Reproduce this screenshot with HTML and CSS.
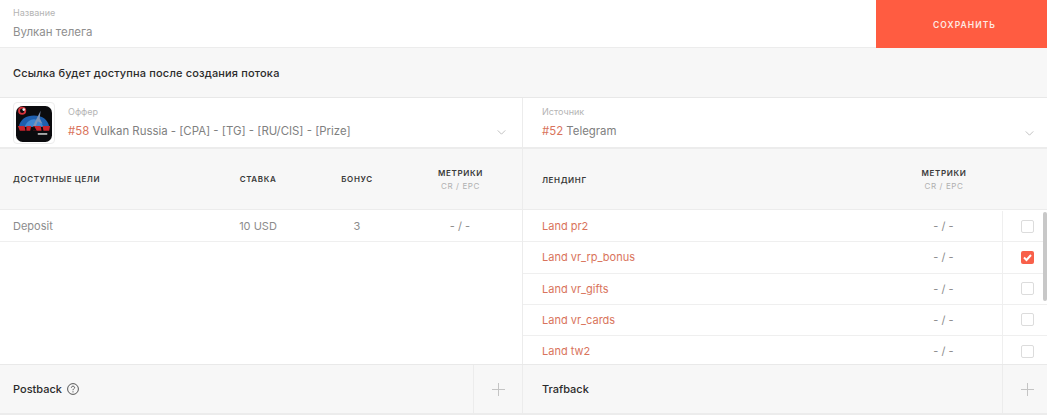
FILE: index.html
```html
<!DOCTYPE html>
<html lang="ru">
<head>
<meta charset="utf-8">
<title>Поток</title>
<link rel="stylesheet" href="styles.css">
</head>
<body>
<div class="page">
  <header class="top">
    <div class="name">
      <div class="label">Название</div>
      <div class="name-value">Вулкан телега</div>
    </div>
    <button class="save">СОХРАНИТЬ</button>
  </header>
  <div class="notice">Ссылка будет доступна после создания потока</div>
  <div class="cols selects">
    <div class="select offer">
      <div class="logo">
        <svg viewBox="0 0 38 38" width="38" height="38">
          <rect width="38" height="38" rx="7" fill="#0b0b0e"/>
          <circle cx="6.500" cy="5" r="3.300" fill="none" stroke="#d5333a" stroke-width="2"/>
          <circle cx="8.200" cy="3.800" r="1.400" fill="#eee"/>
          <path d="M3 22C4 14 11 10 19 10c8 0 15 4 16 12z" fill="#1f5fae"/>
          <path d="M9 22c2-5 6-8 10-8s8 3 10 8z" fill="#3f86d0"/>
          <path d="M18 21l4-8 4-8-1 8 3 6-5-3-2 5z" fill="#7d93b5"/>
          <path d="M2 21h7l1 5H4zM11 21h5l-1 5h-4zM18 21h8l1 5h-9zM28 21h8l-1 5h-6z" fill="#c9242c"/>
          <path d="M16 26l3-5 3 5z" fill="#0b0b0e"/>
          <rect x="23" y="28.500" width="10" height="2" fill="#a8a8a8"/>
        </svg>
      </div>
      <div class="select-text">
        <div class="label">Оффер</div>
        <div class="select-value"><span class="hash">#58</span> Vulkan Russia - [CPA] - [TG] - [RU/CIS] - [Prize]</div>
      </div>
      <svg class="chev" viewBox="0 0 10 6" width="9" height="5"><path d="M.5.5 5 5 9.500.5" fill="none" stroke="#b4b4b4"/></svg>
    </div>
    <div class="select source">
      <div class="select-text">
        <div class="label">Источник</div>
        <div class="select-value"><span class="hash">#52</span> Telegram</div>
      </div>
      <svg class="chev" viewBox="0 0 10 6" width="9" height="5"><path d="M.5.5 5 5 9.500.5" fill="none" stroke="#b4b4b4"/></svg>
    </div>
  </div>
  <div class="cols heads">
    <div class="head-left">
      <div class="th c-goal">ДОСТУПНЫЕ ЦЕЛИ</div>
      <div class="th c-rate">СТАВКА</div>
      <div class="th c-bonus">БОНУС</div>
      <div class="th c-metric">МЕТРИКИ<small>CR / EPC</small></div>
    </div>
    <div class="head-right">
      <div class="th c-land">ЛЕНДИНГ</div>
      <div class="th c-metric2">МЕТРИКИ<small>CR / EPC</small></div>
    </div>
  </div>
  <div class="cols body">
    <div class="goals">
      <div class="goal-row">
        <div class="c-goal goal-name">Deposit</div>
        <div class="c-rate">10 USD</div>
        <div class="c-bonus">3</div>
        <div class="c-metric">- / -</div>
      </div>
    </div>
    <div class="lands">
      <div class="land-row"><a class="c-land">Land pr2</a><div class="c-metric2">- / -</div><div class="c-check"><span class="box"></span></div></div>
      <div class="land-row"><a class="c-land">Land vr_rp_bonus</a><div class="c-metric2">- / -</div><div class="c-check"><span class="box on"><svg viewBox="0 0 13 13" width="13" height="13"><path d="M3 6.500 5.500 9 10 4" fill="none" stroke="#fff" stroke-width="2"/></svg></span></div></div>
      <div class="land-row"><a class="c-land">Land vr_gifts</a><div class="c-metric2">- / -</div><div class="c-check"><span class="box"></span></div></div>
      <div class="land-row"><a class="c-land">Land vr_cards</a><div class="c-metric2">- / -</div><div class="c-check"><span class="box"></span></div></div>
      <div class="land-row"><a class="c-land">Land tw2</a><div class="c-metric2">- / -</div><div class="c-check"><span class="box"></span></div></div>
      <div class="scrollbar"></div>
    </div>
  </div>
  <div class="cols foot">
    <div class="foot-cell foot-left">
      <div class="foot-title">Postback
        <svg class="help" viewBox="0 0 12 12" width="12" height="12"><circle cx="6" cy="6" r="5.400" fill="none" stroke="#444" stroke-width=".9"/><path d="M4.400 4.700C4.400 3.700 5.100 3.200 6 3.200S7.600 3.800 7.600 4.600C7.600 5.700 6 5.800 6 7.200" fill="none" stroke="#444" stroke-width=".9"/><circle cx="6" cy="8.800" r=".6" fill="#444"/></svg>
      </div>
      <div class="plus-cell"><svg viewBox="0 0 13 13" width="13" height="13"><path d="M6.500 0v13M0 6.500h13" stroke="#c4c4c4"/></svg></div>
    </div>
    <div class="foot-cell foot-right">
      <div class="foot-title">Trafback</div>
      <div class="plus-cell"><svg viewBox="0 0 13 13" width="13" height="13"><path d="M6.500 0v13M0 6.500h13" stroke="#c4c4c4"/></svg></div>
    </div>
  </div>
</div>
</body>
</html>
```
FILE: styles.css
```css
* { box-sizing: border-box; }
html, body { margin: 0; padding: 0; background: #fff; }
body {
  font-family: "Inter", "Liberation Sans", sans-serif;
  color: #8a8a8a;
  font-size: 11px;
  overflow: hidden;
}
.page { width: 1047px; height: 417px; display: flex; flex-direction: column; }
.top { height: 48px; display: flex; border-bottom: 1px solid #ececec; flex: none; }
.name { flex: 1; padding: 7px 13px 0; }
.label { font-size: 9px; line-height: 11px; color: #b4b4b4; }
.name-value { margin-top: 7px; font-size: 11.500px; line-height: 14px; color: #8f8f8f; }
.save {
  width: 171px; height: 48px; margin-bottom: -1px;
  border: 0; padding: 1px 0 0 6px; background: #ff5c41; color: #fde9e3;
  font: 600 8.500px "Inter", sans-serif; letter-spacing: 1.050px;
}
.notice {
  height: 50px; flex: none; padding: 0 13px; display: flex; align-items: center;
  background: #f7f7f7; border-bottom: 1px solid #e8e8e8;
  font-size: 11px; font-weight: 500; color: #2b2b2b; letter-spacing: .16px;
}
.cols { display: grid; grid-template-columns: 523px 524px; flex: none; }
.selects { height: 51px; border-bottom: 2px solid #ececec; }
.select { position: relative; display: flex; align-items: flex-start; height: 49px; }
.offer { border-right: 1px solid #ececec; padding-left: 13px; }
.source { padding-left: 19px; }
.logo {
  width: 42px; height: 42px; margin-top: 4px; margin-right: 13px; padding: 2px;
  border: 1px solid #ececec; border-radius: 4px; flex: none; display: flex;
}
.logo svg { display: block; width: 38px; height: 38px; }
.select-text { padding-top: 8px; }
.select-value { margin-top: 7px; font-size: 11.400px; line-height: 14px; color: #808080; white-space: nowrap; }
.hash { color: #d9745c; }
.chev { position: absolute; right: 16px; top: 32px; }
.source .chev { right: 13px; top: 33px; }
.heads { height: 61px; background: #f7f7f7; border-bottom: 1px solid #ececec; }
.head-left, .head-right, .goal-row { display: flex; align-items: center; }
.land-row { display: flex; align-items: center; }
.head-left { border-right: 1px solid #ececec; }
.th { font-size: 8px; font-weight: 600; letter-spacing: .62px; color: #3a3a3a; }
.th small { display: block; margin-top: 3px; font-size: 8px; font-weight: 400; color: #b0b0b0; }
.th.c-land { padding-top: 1px; }
.c-goal { width: 218px; padding-left: 13px; }
.c-rate { width: 80px; text-align: center; }
.c-bonus { width: 118px; text-align: center; }
.c-metric { width: 88px; text-align: center; }
.th.c-metric { padding-left: 1px; }
.c-land { width: 362px; padding-left: 19px; }
.c-metric2 { width: 117px; text-align: center; }
.head-right .c-metric2 { padding-left: 1px; }
.c-check { width: 45px; display: flex; justify-content: center; padding-left: 5px; }
.body { height: 154px; overflow: hidden; }
.goals { border-right: 1px solid #ececec; }
.goal-row { height: 32px; border-bottom: 1px solid #efefef; font-size: 11px; color: #8c8c8c; }
.lands { position: relative; padding-top: 1px; }
.land-row { height: 31.250px; border-bottom: 1px solid #efefef; color: #8c8c8c; }
.land-row:last-of-type { border-bottom: 0; }
.land-row .c-check { height: 100%; align-items: center; border-left: 1px solid #efefef; }
.land-row a { color: #d9745c; font-size: 11px; }
.box { width: 13px; height: 13px; border: 1px solid #dcdcdc; border-radius: 2px; background: #fff; display: block; }
.box.on { background: #f8604a; border: 0; }
.box svg { display: block; }
.scrollbar { position: absolute; right: 0; top: 2px; width: 4px; height: 89px; background: #c8c8c8; border-radius: 2px; }
.foot { height: 51px; background: #f7f7f7; border-top: 1px solid #e9e9e9; border-bottom: 2px solid #ececec; }
.foot-cell { display: flex; align-items: center; }
.foot-left { border-right: 1px solid #ececec; }
.foot-title { flex: 1; padding-left: 13px; font-size: 11px; font-weight: 500; color: #2b2b2b; display: flex; align-items: center; gap: 5px; }
.foot-right .foot-title { padding-left: 19px; }
.plus-cell { width: 49px; height: 100%; border-left: 1px solid #ececec; display: flex; align-items: center; justify-content: center; }
.foot-right .plus-cell { width: 45px; padding-left: 5px; }
```
